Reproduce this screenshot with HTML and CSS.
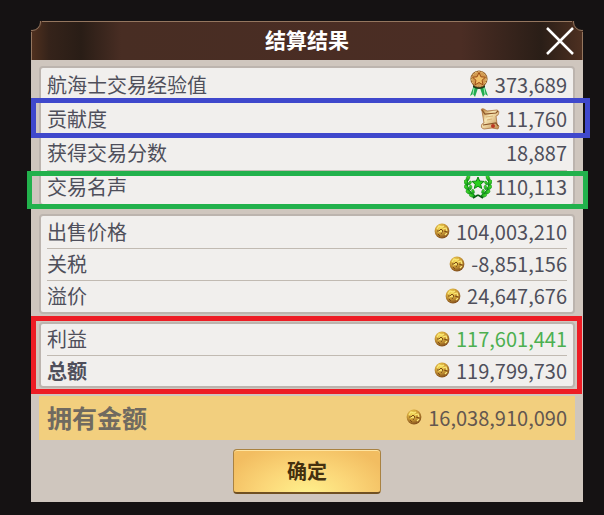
FILE: index.html
```html
<!DOCTYPE html>
<html lang="zh-CN">
<head>
  <meta charset="UTF-8" />
  <meta name="viewport" content="width=device-width, initial-scale=1.0"/>
  <title>结算结果</title>
  <link rel="stylesheet" href="styles.css">
</head>

<body>

  <!-- Shared icons -->
  <svg class="sprite" aria-hidden="true">
    <defs>
      <radialGradient id="gold" cx="40%" cy="30%" r="70%">
        <stop offset="0" stop-color="#f6e05c"/>
        <stop offset="0.5" stop-color="#cf9f38"/>
        <stop offset="1" stop-color="#84501c"/>
      </radialGradient>
      <linearGradient id="leaf" x1="0" y1="0" x2="0" y2="1">
        <stop offset="0" stop-color="#4fe62c"/>
        <stop offset="1" stop-color="#129a1c"/>
      </linearGradient>
      <linearGradient id="paper" x1="0" y1="0" x2="1" y2="1">
        <stop offset="0" stop-color="#b5762c"/>
        <stop offset="0.4" stop-color="#f7e6b4"/>
        <stop offset="1" stop-color="#c08a4c"/>
      </linearGradient>
    </defs>
    <symbol id="coin" viewBox="0 0 16 16">
      <circle cx="8" cy="8" r="7.4" fill="url(#gold)"/>
      <path d="M3 6l2-3 3 1 2-1M9 6l3-1 1 3M4 9l3-1 1 2M11 12l2-2" fill="none" stroke="#fbe878" stroke-width="1.3"/>
      <path d="M3 8l2 0 2-2 2 2-2 3M10 8l3 1M4 11l2 2" fill="none" stroke="#7d4c17" stroke-width="1"/>
    </symbol>
    <symbol id="branch" viewBox="0 0 14 24">
      <path d="M5 2Q-1 13 11 21" fill="none" stroke="#0a8214" stroke-width="1.5"/>
      <g fill="url(#leaf)" stroke="#0a8a16" stroke-width=".5">
        <ellipse cx="4" cy="3" rx="1.7" ry="2.8" transform="rotate(20 4 3)"/>
        <ellipse cx="2" cy="7.500" rx="1.7" ry="2.8" transform="rotate(-20 2 7.500)"/>
        <ellipse cx="2.500" cy="12.500" rx="1.7" ry="2.8" transform="rotate(-40 2.500 12.500)"/>
        <ellipse cx="4.500" cy="17" rx="1.7" ry="2.8" transform="rotate(-60 4.500 17)"/>
        <ellipse cx="8" cy="20.500" rx="1.6" ry="2.7" transform="rotate(-75 8 20.500)"/>
        <ellipse cx="5.800" cy="8" rx="1.3" ry="2.3" transform="rotate(35 5.800 8)"/>
        <ellipse cx="6.500" cy="12.500" rx="1.3" ry="2.3" transform="rotate(15 6.500 12.500)"/>
        <ellipse cx="9" cy="16.500" rx="1.3" ry="2.3" transform="rotate(-15 9 16.500)"/>
      </g>
      <path d="M9 23l5-3" stroke="#075f10" stroke-width="1.6"/>
    </symbol>
  </svg>

  <main class="dialog">
    <header>
      <h1>结算结果</h1>
      <button class="close" aria-label="关闭">
        <svg viewBox="0 0 28 28"><path d="M1 1l26 26M27 1L1 27"/></svg>
      </button>
    </header>

    <div class="content">
      <dl class="panel points">
        <div class="row">
          <dt>航海士交易经验值</dt>
          <dd>
            <svg class="medal" viewBox="0 0 20 28" aria-hidden="true">
              <path d="M5 15L1 26l3-2 2 3 3-9zM15 15l4 11-3-2-2 3-3-9z" fill="#22ac50"/>
              <path d="M5 18L4 24M15 18l1 6" stroke="#a5edba" stroke-width="1"/>
              <path d="M4 15q6 4 12 0l0 2q-6 4-12 0z" fill="#20351a"/>
              <circle cx="10" cy="9" r="8.6" fill="#8f5a25"/>
              <circle cx="10" cy="9" r="7.3" fill="#d39a50" stroke="#f0cb85" stroke-dasharray="2 1"/>
              <path d="M10 2.500l1.900 4.300 4.600.4-3.500 3.100 1.100 4.600L10 12.500l-4.100 2.400L7 10.300 3.500 7.200l4.600-.4z" fill="#f0bd66" stroke="#9b4b16" stroke-width="1"/>
            </svg>
            <span>373,689</span>
          </dd>
        </div>
        <div class="row marked blue">
          <dt>贡献度</dt>
          <dd>
            <svg class="scroll" viewBox="0 0 20 22" aria-hidden="true">
              <path d="M2 3q-2-3 2-2l3 2 10-1q3 1 1 5l-2 1 1 8 2 2-1 3-6-1-8 1q-4-1-2-5l2-1z" fill="url(#paper)" stroke="#aa713e" stroke-width=".8"/>
              <path d="M2 2l3 4 11-1 2-2M3 17l13-2 2 3" fill="none" stroke="#8a5428" stroke-width="1.2"/>
              <path d="M6 9l7-1M7 12l5-1" stroke="#d8b277" stroke-width="1"/>
              <circle cx="13" cy="18" r="2" fill="#bb3823"/>
            </svg>
            <span>11,760</span>
          </dd>
        </div>
        <div class="row">
          <dt>获得交易分数</dt>
          <dd><span>18,887</span></dd>
        </div>
        <div class="row marked green">
          <dt>交易名声</dt>
          <dd>
            <svg class="laurel" viewBox="0 0 28 24" aria-hidden="true">
              <use href="#branch" width="14" height="24"/>
              <use href="#branch" width="14" height="24" transform="matrix(-1 0 0 1 28 0)"/>
              <path d="M14 2l1.700 4 4.300.4-3.300 2.900 1 4.200L14 11.300l-3.700 2.200 1-4.200L8 6.400l4.300-.4z" fill="#29cf1d" stroke="#08850f"/>
            </svg>
            <span>110,113</span>
          </dd>
        </div>
      </dl>

      <dl class="panel">
        <div class="row">
          <dt>出售价格</dt>
          <dd><svg class="coin" aria-hidden="true"><use href="#coin"/></svg><span>104,003,210</span></dd>
        </div>
        <div class="row">
          <dt>关税</dt>
          <dd><svg class="coin" aria-hidden="true"><use href="#coin"/></svg><span>-8,851,156</span></dd>
        </div>
        <div class="row">
          <dt>溢价</dt>
          <dd><svg class="coin" aria-hidden="true"><use href="#coin"/></svg><span>24,647,676</span></dd>
        </div>
      </dl>

      <dl class="panel totals marked red">
        <div class="row">
          <dt>利益</dt>
          <dd class="profit"><svg class="coin" aria-hidden="true"><use href="#coin"/></svg><span>117,601,441</span></dd>
        </div>
        <div class="row">
          <dt class="bold">总额</dt>
          <dd><svg class="coin" aria-hidden="true"><use href="#coin"/></svg><span>119,799,730</span></dd>
        </div>
      </dl>

      <dl class="balance">
        <div class="row">
          <dt>拥有金额</dt>
          <dd><svg class="coin" aria-hidden="true"><use href="#coin"/></svg><span>16,038,910,090</span></dd>
        </div>
      </dl>

      <button class="confirm">确定</button>
    </div>
  </main>

</body>
</html>
```
FILE: styles.css
```css
* {
  box-sizing: border-box;
}

body {
  margin: 0;
  padding: 21px 21px 13px 31px;
  background: #151213;
  font-family: "Noto Sans CJK SC", "Noto Sans", sans-serif;
  font-size: 20px;
  color: #4f4f5b;
}

.sprite {
  position: absolute;
  width: 0;
  height: 0;
}

.dialog {
  background: #cfc6be;
}

/* Title bar */
header {
  position: relative;
  display: grid;
  grid-template-columns: 1fr auto 1fr;
  align-items: center;
  height: 39px;
  padding: 0 9px;
  overflow: hidden;
  background: linear-gradient(90deg, #51311f 0, #35231a 18px, #291d16 50px, #482d23 90px, #4b2d24 430px, #2a1e17 510px, #4e3021 100%);
  box-shadow: inset 0 1px #94765f, inset 1px 0 #94765f, inset -1px 0 #94765f;
}

/* Scooped corners */
header::before,
header::after {
  content: "";
  position: absolute;
  top: -8px;
  width: 16px;
  height: 16px;
  border: 1px solid #94765f;
  border-radius: 50%;
  background: #151213;
  box-shadow: 0 0 0 1px #4e3021;
}

header::before {
  left: -8px;
}

header::after {
  right: -8px;
}

h1 {
  grid-column: 2;
  margin: 0;
  font-size: 21px;
  line-height: 32px;
  padding-bottom: 4px;
  color: #fff;
}

button {
  font-family: inherit;
  cursor: pointer;
}

.close {
  justify-self: end;
  display: flex;
  padding: 0;
  border: none;
  background: none;
}

.close svg {
  width: 28px;
  height: 28px;
  fill: none;
  stroke: #fff;
  stroke-width: 2.5;
}

.content {
  display: flex;
  flex-direction: column;
  padding: 6px 8px 8px;
}

/* Result groups */
dl,
dd {
  margin: 0;
}

.panel {
  margin-bottom: 8px;
  padding: 0 6px;
  border: 2px solid #bcb4ae;
  border-radius: 4px;
  background: #f1efed;
}

.row {
  display: flex;
  justify-content: space-between;
  align-items: center;
  height: 32px;
}

.panel .row + .row {
  border-top: 1px solid #c1bab2;
}

.points .row {
  height: 34px;
}

.totals .row {
  height: 31px;
}

dt,
dd {
  padding-bottom: 2px;
}

dd {
  display: flex;
  align-items: center;
  gap: 6px;
}

.profit {
  color: #4caf50;
}

.bold {
  font-weight: bold;
}

.coin {
  width: 16px;
  height: 16px;
}

.medal {
  width: 20px;
  height: 28px;
}

.scroll {
  width: 20px;
  height: 22px;
}

.laurel {
  width: 28px;
  height: 24px;
}

.green dd {
  gap: 3px;
}

.balance {
  padding: 0 8px;
  background: #f2cf7e;
}

.balance .row {
  height: 44px;
}

.balance dt {
  font-size: 25px;
  font-weight: bold;
  color: #706a60;
}

.balance dd {
  color: #635750;
}

/* Coloured frames round the highlighted rows */
.marked {
  position: relative;
}

.marked::after {
  content: "";
  position: absolute;
  z-index: 1;
  border: 5px solid;
  pointer-events: none;
}

.blue::after {
  inset: -5px -23px -2px -16px;
  border-color: #3f48cc;
}

.green::after {
  inset: 0 -21px -5px -20px;
  border-color: #22b14c;
}

.red::after {
  inset: -8px -9px -8px -10px;
  border-color: #ed1c24;
}

.confirm {
  align-self: center;
  width: 148px;
  height: 45px;
  margin-top: 9px;
  padding: 0 0 2px;
  border: 1px solid #a98242;
  border-bottom: 2px solid #705022;
  border-radius: 4px;
  background: radial-gradient(ellipse at 50% 110%, #fff28d 0, #fbd678 45%, #f2bd61 85%);
  box-shadow: inset 0 1px #ffe5a2;
  font-size: 20px;
  font-weight: bold;
  color: #44300f;
}
```
